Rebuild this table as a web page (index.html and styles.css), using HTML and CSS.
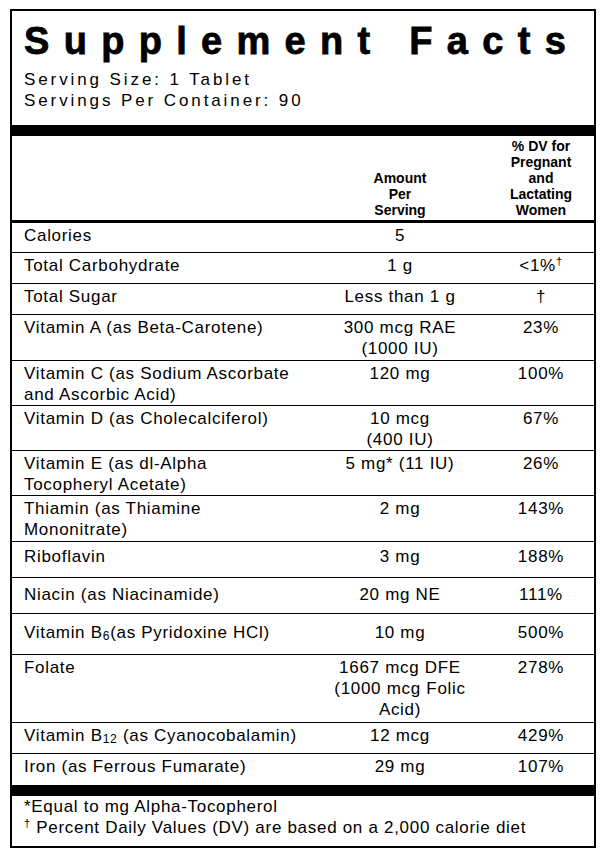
FILE: index.html
```html
<!DOCTYPE html>
<html lang="en">
<head>
<meta charset="utf-8">
<title>Supplement Facts</title>
<link rel="stylesheet" href="styles.css">
</head>
<body>
<div class="label">
  <header class="head">
    <h1 class="title">Supplement Facts</h1>
    <p class="serving">Serving Size: 1 Tablet</p>
    <p class="serving">Servings Per Container: 90</p>
  </header>
  <div class="bar"></div>
  <table class="facts">
    <colgroup>
      <col class="c-name">
      <col class="c-amt">
      <col class="c-dv">
    </colgroup>
    <thead>
      <tr class="hdr">
        <th></th>
        <th>Amount<br>Per<br>Serving</th>
        <th>% DV for<br>Pregnant<br>and<br>Lactating<br>Women</th>
      </tr>
    </thead>
    <tbody>
      <tr class="r30"><td>Calories</td><td>5</td><td></td></tr>
      <tr class="r30"><td>Total Carbohydrate</td><td>1 g</td><td>&lt;1%<sup class="dag">†</sup></td></tr>
      <tr class="r30"><td>Total Sugar</td><td>Less than 1 g</td><td>†</td></tr>
      <tr class="r45"><td>Vitamin A (as Beta-Carotene)</td><td>300 mcg RAE<br>(1000 IU)</td><td>23%</td></tr>
      <tr class="r43"><td>Vitamin C (as Sodium Ascorbate<br>and Ascorbic Acid)</td><td>120 mg</td><td>100%</td></tr>
      <tr class="r44"><td>Vitamin D (as Cholecalciferol)</td><td>10 mcg<br>(400 IU)</td><td>67%</td></tr>
      <tr class="r44"><td>Vitamin E (as dl-Alpha<br>Tocopheryl Acetate)</td><td>5 mg* (11 IU)</td><td>26%</td></tr>
      <tr class="r45"><td>Thiamin (as Thiamine<br>Mononitrate)</td><td>2 mg</td><td>143%</td></tr>
      <tr class="r35 p4"><td>Riboflavin</td><td>3 mg</td><td>188%</td></tr>
      <tr class="r35 p6"><td>Niacin (as Niacinamide)</td><td>20 mg NE</td><td>111%</td></tr>
      <tr class="r40 p8"><td>Vitamin B<sub class="sub">6</sub>(as Pyridoxine HCl)</td><td>10 mg</td><td>500%</td></tr>
      <tr class="r67"><td>Folate</td><td>1667 mcg DFE<br>(1000 mcg Folic<br>Acid)</td><td>278%</td></tr>
      <tr class="r30"><td>Vitamin B<sub class="sub">12</sub> (as Cyanocobalamin)</td><td>12 mcg</td><td>429%</td></tr>
      <tr class="r31 last"><td>Iron (as Ferrous Fumarate)</td><td>29 mg</td><td>107%</td></tr>
    </tbody>
  </table>
  <div class="bar"></div>
  <div class="notes">
    <p class="note">*Equal to mg Alpha-Tocopherol</p>
    <p class="note"><sup class="dag">†</sup> Percent Daily Values (DV) are based on a 2,000 calorie diet</p>
  </div>
</div>
</body>
</html>
```

FILE: styles.css
```css
html, body {
  margin: 0;
  padding: 0;
  background: #fff;
}

body {
  font-family: "Liberation Sans", Arial, sans-serif;
  color: #000;
}

.label {
  margin: 9px 0 0 10px;
  width: 586px;
  box-sizing: border-box;
  border: 2px solid #000;
}

.head {
  padding: 11px 0 14px 12px;
}

.title {
  margin: 0;
  font-size: 38px;
  line-height: 38px;
  font-weight: bold;
  letter-spacing: 14.3px;
  -webkit-text-stroke: 0.8px #000;
  white-space: nowrap;
}

.serving {
  margin: 0;
  font-size: 17px;
  line-height: 21px;
  letter-spacing: 2.9px;
}

.title + .serving {
  margin-top: 9px;
}

.bar {
  height: 11px;
  background: #000;
}

.facts {
  width: 100%;
  border-collapse: collapse;
  table-layout: fixed;
  font-size: 17px;
  line-height: 21px;
  letter-spacing: 0.7px;
}

.c-name { width: 300px; }
.c-amt { width: 176px; }
.c-dv { width: auto; }

.hdr th {
  height: 82px;
  padding: 0 0 2px;
  vertical-align: bottom;
  font-size: 14px;
  line-height: 16px;
  font-weight: bold;
  letter-spacing: 0;
  text-align: center;
  border-bottom: 3px solid #000;
}

.facts td {
  padding: 2px 0 0;
  vertical-align: top;
  text-align: center;
}

.facts td:first-child {
  text-align: left;
  padding-left: 12px;
}

.facts tbody tr {
  border-bottom: 1px solid #000;
}

.facts tbody tr.last {
  border-bottom: 0;
}

.r30 { height: 31px; }
.r31 { height: 31px; }
.r35 { height: 36px; }
.r40 { height: 41px; }
.r43 { height: 44px; }
.r44 { height: 45px; }
.r45 { height: 46px; }
.r67 { height: 68px; }

.facts .p4 td { padding-top: 4px; }
.facts .p6 td { padding-top: 6px; }
.facts .p8 td { padding-top: 8px; }

.dag {
  font-size: 11px;
  line-height: 0;
  vertical-align: 6px;
}

.sub {
  font-size: 12px;
  line-height: 0;
  vertical-align: -2px;
}

.notes {
  padding: 0 0 8px 12px;
}

.note {
  margin: 0;
  font-size: 17px;
  line-height: 21px;
  letter-spacing: 0.7px;
}
```
